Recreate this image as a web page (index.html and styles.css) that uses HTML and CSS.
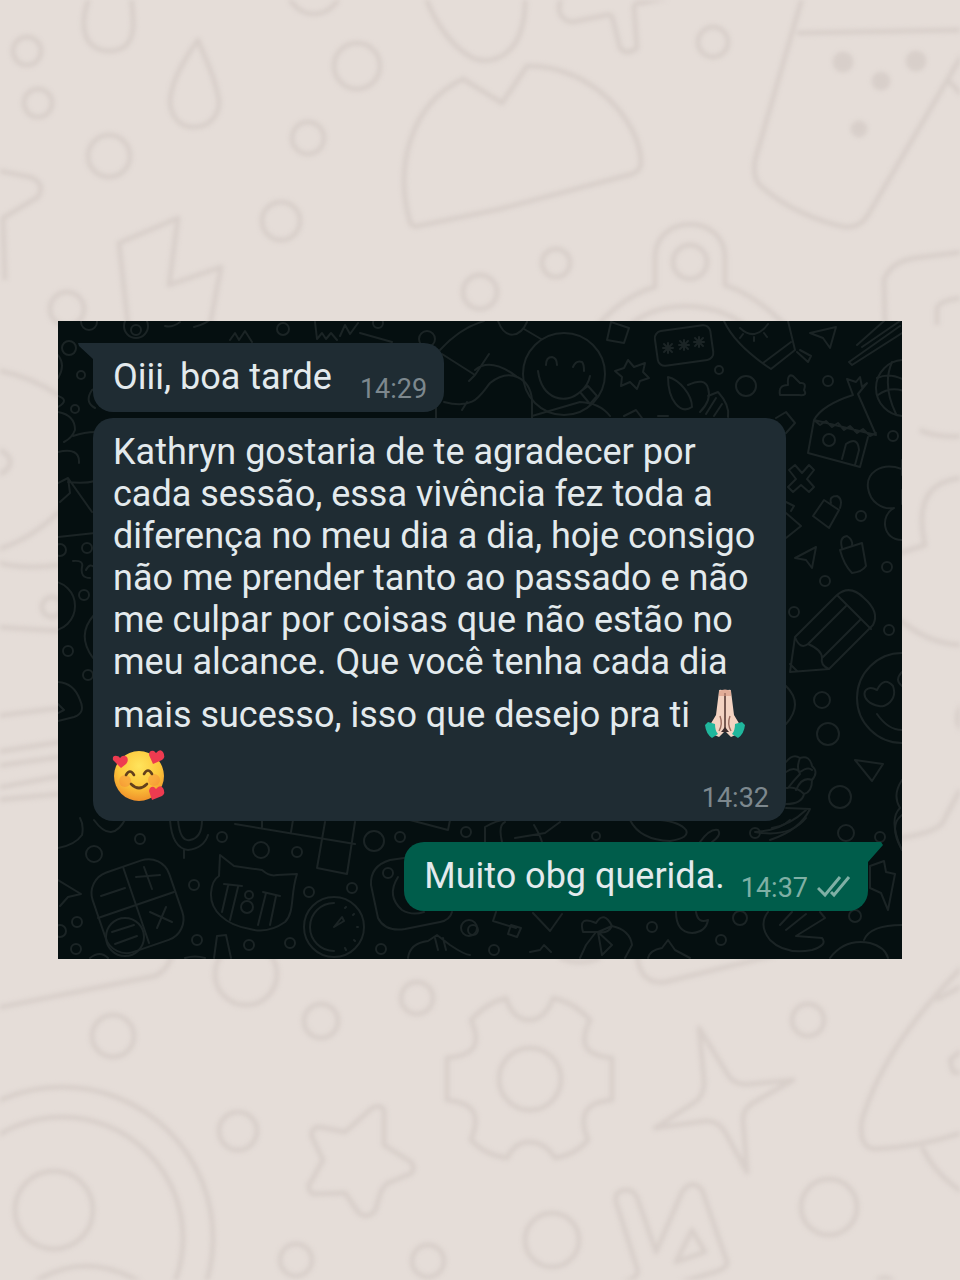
FILE: index.html
```html
<!DOCTYPE html>
<html lang="pt-BR">

<head>
    <meta charset="UTF-8">
    <meta name="viewport" content="width=device-width, initial-scale=1.0">
    <title>Depoimento</title>
    <link rel="stylesheet" href="styles.css">
</head>

<body>
    <!-- Light wallpaper -->
    <svg class="wallpaper" viewBox="0 0 960 1280" preserveAspectRatio="xMidYMid slice" aria-hidden="true">
        <circle cx="27" cy="51" r="14" />
        <circle cx="38" cy="103" r="14" />
        <circle cx="109" cy="156" r="21" />
        <circle cx="308" cy="138" r="16" />
        <circle cx="357" cy="66" r="23" />
        <circle cx="281" cy="221" r="19" />
        <circle cx="314" cy="-13" r="27" />
        <circle cx="67" cy="309" r="17" />
        <circle cx="480" cy="292" r="17" />
        <circle cx="556" cy="263" r="14" />
        <circle cx="713" cy="42" r="15" />
        <path d="M92 -10C80 18 78 50 110 51C140 50 134 18 130 -10" />
        <path d="M198 40C180 65 170 85 170 103C172 120 182 127 194 127C212 127 220 112 219 100C214 75 208 65 198 40Z" />
        <path d="M-5 170L30 177Q46 183 38 197L3 218L5 280" />
        <path d="M128 325L119 243L178 218L169 285L221 267L210 325" />
        <path d="M425 -5C435 25 455 50 475 59C495 65 515 52 521 30Q526 15 525 -5" />
        <path d="M410 222C395 170 408 105 463 79L502 103L527 66C590 65 640 120 641 162Q641 171 632 174L500 209L418 226Q412 227 410 222Z" />
        <path d="M563 -5C555 10 560 20 572 22L607 15Q612 14 613 20L620 48Q627 56 637 48L634 8Q634 2 642 3L680 -5" />
        <path d="M803 -5L755 160Q752 180 762 187C785 208 820 222 845 227Q860 228 868 215L965 50M797 33L962 30M948 80L962 95" />
        <g class="filled">
            <circle cx="843" cy="62" r="8" />
            <circle cx="881" cy="81" r="7" />
            <circle cx="916" cy="61" r="8" />
            <circle cx="859" cy="129" r="6" />
        </g>
        <circle cx="690" cy="262" r="17" />
        <path d="M598 325Q625 295 655 287V258C655 213 725 213 725 258V285Q755 295 785 325M630 325C660 300 710 300 745 325" />
        <path d="M885 325L884 280Q890 262 915 258L962 252M937 325V308Q940 300 962 298" />

        <path d="M-4 370Q30 376 60 396M0 450Q15 458 8 468Q4 474 -4 474M-4 550Q30 540 60 511M-4 562Q20 570 60 565" />
        <circle cx="52" cy="607" r="10" />
        <path d="M-4 627L60 631M-4 716L60 708M-4 752L60 742M-4 766L60 757M-4 788L60 776M-4 800L60 794" />
        <path d="M900 553L925 545C915 500 930 480 964 478M900 620Q930 645 964 645M964 702Q952 718 962 730M900 838Q942 832 945 818L960 790M920 430Q935 438 964 436" />

        <path d="M-4 1008L155 976Q168 970 172 955" />
        <circle cx="246" cy="974" r="31" />
        <circle cx="113" cy="1036" r="21" />
        <circle cx="321" cy="1021" r="17" />
        <circle cx="417" cy="998" r="16" />
        <circle cx="238" cy="1131" r="19" />
        <circle cx="296" cy="1260" r="16" />
        <circle cx="428" cy="1261" r="16" />
        <circle cx="62" cy="1238" r="151" />
        <circle cx="62" cy="1238" r="121" />
        <circle cx="54" cy="1210" r="39" />
        <path d="M30 1285Q85 1247 145 1285" />
        <path d="M372 1108Q386 1102 384 1118L384 1145L411 1162Q418 1172 405 1176L388 1183Q381 1188 379 1198L375 1211Q366 1220 358 1212L345 1193L313 1194Q305 1188 312 1180L323 1160L312 1137Q310 1127 320 1127L345 1132Z" />
        <path d="M506 998Q513 1020 529 1020Q545 1020 553 998Q575 1003 590 1020C578 1045 585 1055 612 1058V1100C585 1102 578 1115 588 1140Q575 1155 555 1158Q545 1142 529 1142Q515 1142 507 1158Q485 1155 471 1140C481 1115 475 1103 447 1100V1058C475 1055 482 1045 471 1020Q486 1003 506 998Z" />
        <circle cx="530" cy="1079" r="31" />
        <path d="M699 1028L728 1075Q735 1086 750 1084L793 1080L758 1100Q742 1108 743 1120L747 1172L725 1132Q718 1120 705 1121L655 1128L695 1102Q705 1095 704 1080Z" />
        <circle cx="808" cy="1020" r="16" />
        <circle cx="829" cy="1207" r="28" />
        <circle cx="552" cy="1240" r="27" />
        <circle cx="885" cy="1290" r="12" />
        <path d="M610 1285Q642 1280 637 1268L616 1202Q614 1190 627 1190Q635 1190 638 1200L656 1252L682 1192Q692 1178 702 1190L727 1262Q728 1268 715 1272L675 1284M692 1230L676 1262L705 1252Z" />
        <path d="M964 965C920 1010 880 1060 862 1120Q858 1148 875 1149Q920 1147 964 1132M922 1147Q935 1175 964 1193M936 1000L962 986M962 1050L950 1060L953 1072L964 1073" />
        <path d="M637 955Q640 985 665 982L775 955M560 958Q580 966 600 958" />
    </svg>

    <main class="chat">
        <!-- Dark doodles, drawn on a 844 x 638 sheet that starts at 58,321 -->
        <svg class="doodles" viewBox="58 321 844 638" preserveAspectRatio="xMidYMid slice" aria-hidden="true">
            <!-- top -->
            <circle cx="89" cy="322" r="8" />
            <circle cx="69" cy="348" r="7" />
            <circle cx="81" cy="375" r="4" />
            <circle cx="75" cy="409" r="4" />
            <circle cx="136" cy="326" r="12" />
            <circle cx="136" cy="330" r="5" />
            <circle cx="283" cy="329" r="6" />
            <circle cx="378" cy="323" r="5" />
            <circle cx="427" cy="339" r="8" />
            <path d="M165 326Q172 328 180 322M194 327Q206 324 212 318M230 340L235 333L239 340L245 331L252 342M315 322L317 339L322 333L326 339L331 333L337 340M340 336L345 325L350 334L358 323M360 333L392 342" />
            <path d="M440 350Q460 328 484 321M442 354L475 375L489 354M475 375L469 381M444 402C475 410 480 395 490 383C510 367 530 378 532 400V418M475 370Q490 357 516 376M436 392V418M467 402L462 410" />
            <circle cx="564" cy="374" r="41" />
            <path d="M546 365Q546 357 552 357Q557 358 557 365M573 367Q576 360 582 362Q584 364 584 371M538 371C542 400 566 405 580 392Q588 386 590 376M580 392L588 386L597 396L590 404ZM532 416L580 402Q600 403 610 416M498 321C505 340 520 338 527 322M524 329L541 339" />
            <path d="M611 322L629 328L624 343L607 340Z" />
            <path d="M628 360L634 367L645 363L643 372L649 378L640 381L637 389L630 382L621 386L622 377L615 371L624 368Z" />
            <rect x="656" y="328" width="56" height="35" rx="7" transform="rotate(-8 684 345)" />
            <path d="M663 348H673M668 343V353M664 344L672 352M672 344L664 352M679 345H689M684 340V350M680 341L688 349M688 341L680 349M694 342H704M699 337V347M695 338L703 346M703 338L695 346" />
            <path d="M724 321Q735 345 771 369L795 350L788 321M763 363L791 342M797 352L808 362L811 356L800 350M740 328Q755 342 768 324M743 334L740 338M754 337V341M764 333L767 337" />
            <path d="M810 333L836 327L830 348L823 338Z" />
            <path d="M857 345L884 321M862 347L900 321M849 362L900 326M852 365L902 333M849 362L852 365" />
            <circle cx="719" cy="370" r="4" />
            <circle cx="746" cy="386" r="10" />
            <circle cx="828" cy="381" r="5" />
            <path d="M780 395Q778 385 788 385Q787 373 793 376L800 383Q807 382 804 390Q808 396 799 395Z" />
            <circle cx="904" cy="388" r="28" />
            <path d="M877 378Q890 372 904 380M878 395Q890 386 904 391M892 362Q882 385 896 414" />
            <path d="M668 377C680 380 692 395 692 407C680 415 668 400 668 377M688 385Q705 377 708 388Q712 400 700 412M708 396L718 392Q730 405 728 417M716 398L706 414M722 404L714 416M624 416L636 410L642 418M658 416L668 416" />
            <path d="M776 418L786 412L795 423L786 433" />
            <!-- right column -->
            <path d="M853 395L847 379L856 382L860 377L862 387L867 383L858 394L876 435L814 420Q822 405 853 395M814 420L808 453L860 467L868 437M814 420L820 425L826 421L832 427L838 423L844 430L850 426L857 433L863 429L870 436L876 433M842 459L846 444Q858 436 859 450L855 465" />
            <circle cx="829" cy="440" r="6" />
            <circle cx="893" cy="436" r="5" />
            <path d="M789 470L795 465L802 473L809 465L814 470L807 479L814 487L809 492L801 485L793 492L788 487L796 479Z" />
            <path d="M902 469C880 461 866 474 868 488C870 502 882 510 894 508M894 508C880 515 882 540 902 540M902 460V475M902 490V504" />
            <path d="M824 500L839 510L829 528L813 516ZM831 503Q829 496 837 496Q843 499 840 508" />
            <circle cx="861" cy="516" r="5" />
            <path d="M786 502L794 506L791 511M786 513L801 526L786 538" />
            <path d="M795 558L816 547L812 568L806 560Z" />
            <path d="M840 550L862 543L866 566Q862 572 852 573Q844 565 840 550M842 548Q839 537 847 536Q853 540 852 545" />
            <circle cx="887" cy="567" r="5" />
            <circle cx="825" cy="581" r="5" />
            <circle cx="794" cy="612" r="5" />
            <circle cx="889" cy="630" r="5" />
            <path d="M795 637L837 595Q850 584 864 598Q880 612 873 625L829 669L790 672ZM837 595L871 629M846 606L808 644M860 620L822 658M795 637Q800 650 808 644Q822 650 822 658Q820 665 829 669M790 664L797 671" />
            <circle cx="902" cy="698" r="45" />
            <path d="M879 706C858 702 862 682 877 690Q884 676 893 686C898 700 885 708 879 706M877 714Q888 730 902 730M902 672Q894 680 902 686" />
            <circle cx="822" cy="700" r="8" />
            <circle cx="828" cy="734" r="11" />
            <circle cx="840" cy="797" r="11" />
            <circle cx="846" cy="833" r="8" />
            <circle cx="880" cy="837" r="5" />
            <path d="M786 686Q804 704 786 724M855 760L883 764L872 781Z" />
            <path d="M786 762Q793 753 800 758Q810 755 812 766Q819 772 812 780Q812 792 804 794Q802 804 786 804M786 772Q794 766 800 772Q808 766 812 770M800 758Q796 768 800 774Q794 780 788 788M812 780Q802 776 796 790M786 788Q796 786 804 794" />
            <path d="M786 808L810 809Q800 830 770 840M806 810Q790 825 772 828" />
            <path d="M902 780Q892 795 900 808Q888 820 902 850" />
            <!-- left column -->
            <path d="M58 355Q66 365 58 378M58 396Q70 400 58 407M58 412Q75 415 75 430Q72 438 64 442M73 436Q85 432 95 432M58 452Q80 447 79 463M58 483L68 478L92 512M68 478L70 493L60 502M68 482Q84 484 95 481M95 408Q84 402 92 390L104 385M58 537L95 533M73 561Q84 560 82 567Q80 578 90 578M86 570Q90 562 95 568" />
            <circle cx="60" cy="550" r="6" />
            <circle cx="87" cy="548" r="5" />
            <circle cx="84" cy="595" r="5" />
            <circle cx="50" cy="606" r="25" />
            <path d="M94 615Q76 635 93 658" />
            <circle cx="68" cy="651" r="5" />
            <circle cx="88" cy="675" r="5" />
            <!-- bottom -->
            <path d="M58 682Q74 683 80 700Q86 713 74 717L58 721M58 704L64 710L58 713" />
            <circle cx="94" cy="854" r="8" />
            <circle cx="140" cy="839" r="5" />
            <path d="M58 848Q75 845 82 835Q84 825 80 818M94 820Q112 845 126 818M58 880L81 894L68 897L60 906M170 820Q172 848 188 850Q204 848 208 835M178 820Q180 842 190 840Q202 838 202 820M184 850V858" />
            <circle cx="60" cy="931" r="6" />
            <circle cx="77" cy="922" r="5" />
            <circle cx="76" cy="949" r="5" />
            <circle cx="222" cy="837" r="5" />
            <circle cx="261" cy="850" r="8" />
            <circle cx="297" cy="852" r="5" />
            <circle cx="194" cy="885" r="5" />
            <circle cx="309" cy="892" r="5" />
            <circle cx="352" cy="888" r="5" />
            <circle cx="374" cy="841" r="10" />
            <circle cx="400" cy="837" r="5" />
            <circle cx="466" cy="832" r="5" />
            <circle cx="197" cy="940" r="5" />
            <circle cx="249" cy="945" r="5" />
            <circle cx="290" cy="943" r="5" />
            <circle cx="381" cy="949" r="5" />
            <circle cx="469" cy="928" r="8" />
            <rect x="97" y="864" width="81" height="84" rx="22" transform="rotate(-19 138 906)" />
            <path d="M123 867L149 943M98 918L174 892M101 896L125 888M136 877L160 875M144 867L152 889M150 912L172 922M166 907L157 928M112 932L134 925M115 944L137 936" />
            <circle cx="125" cy="937" r="19" />
            <path d="M220 855L234 866L262 870Q270 877 277 875L297 874C290 895 295 912 285 922Q268 934 250 929C225 925 210 910 211 893Q212 880 219 876ZM224 884L242 886M228 886L222 912M238 887L230 920M263 892L280 896M266 893L258 925M276 896L270 925" />
            <circle cx="249" cy="895" r="4" />
            <circle cx="247" cy="907" r="6" />
            <path d="M235 824L355 844M325 822L317 868L347 874L355 822M262 820V827M293 820L291 832M410 820L448 830L450 820" />
            <circle cx="334" cy="927" r="30" />
            <path d="M334 903A24 24 0 1 0 334 951M334 927L342 917L344 921ZM345 908L346 907M353 915L354 914M357 927H358M354 940L355 941M345 948L346 950M214 958L217 936L226 935L231 958M185 958Q195 955 205 958M90 958Q100 950 108 958" />
            <path d="M404 858L390 860Q370 866 371 885L378 918Q385 932 405 929L440 922Q450 920 452 912M398 877Q386 896 402 910Q412 916 424 912" />
            <circle cx="388" cy="873" r="5" />
            <path d="M408 958Q410 943 428 941L437 935L450 945Q465 955 470 955M435 938L438 950M443 938L446 950" />
            <path d="M485 842V827Q500 818 510 820M502 842Q498 825 505 822M515 838L545 833L560 822M534 825Q540 835 542 842M630 820Q640 840 670 841Q690 838 686 830Q680 822 660 820M700 842Q710 828 718 830Q722 835 712 842M755 832Q790 838 806 818M755 832Q780 830 790 820" />
            <circle cx="596" cy="836" r="4" />
            <circle cx="755" cy="833" r="5" />
            <path d="M902 815Q888 825 902 850M870 866L884 861L886 872L895 874L888 910L881 893L870 888Z" />
            <path d="M496 912L493 921L516 928M511 925L521 928L517 937L508 934ZM533 913L550 931L562 914M583 932Q578 915 596 923Q604 910 612 926Q608 934 598 932ZM596 932L586 945L580 958M598 932L602 955L612 945L598 932L612 926Q630 930 632 945L625 958M530 952L540 950L544 945L551 952M648 958Q650 950 662 948L668 940L675 950L690 958M676 912Q676 932 692 933Q706 932 708 920Q698 924 696 912" />
            <circle cx="473" cy="930" r="5" />
            <circle cx="494" cy="950" r="5" />
            <circle cx="652" cy="927" r="5" />
            <circle cx="721" cy="940" r="5" />
            <circle cx="740" cy="918" r="7" />
            <circle cx="855" cy="916" r="6" />
            <path d="M768 912Q758 925 770 940Q785 955 812 950Q828 945 822 938L796 936L825 918L820 912M780 925L792 912M786 930L806 914M830 958Q845 938 870 943Q885 947 888 958M864 940Q870 925 902 925" />
        </svg>

        <div class="bubble received tail">
            <p class="text">Oiii, boa tarde</p>
            <time class="time">14:29</time>
        </div>

        <div class="bubble received long">
            <p class="text">Kathryn gostaria de te agradecer por cada sessão, essa vivência fez toda a diferença no meu dia a
                dia, hoje consigo não me prender tanto ao passado e não me culpar por coisas que não estão no meu
                alcance. Que você tenha cada dia mais sucesso, isso que desejo pra ti
                <svg class="emoji" viewBox="0 0 52 52" role="img" aria-label="Mãos juntas">
                    <path d="M20 3Q20 1 23 2Q25 2 25 5V44L20 49L9 44L11 37L17 27Z" fill="#f3d3c2" />
                    <path d="M32 3Q32 1 29 2Q27 2 27 5V44L32 49L43 44L41 37L35 27Z" fill="#f3d3c2" />
                    <path d="M20 3Q26 0 32 3V8H20Z" fill="#e2ad98" />
                    <path d="M26 5V44M21 28Q24 36 20 43M31 28Q28 36 32 43" fill="none" stroke="#9c6d60" stroke-width="1.4" />
                    <path d="M26 39L22 44H30Z" fill="#3b2b2b" />
                    <path d="M9 34L16 36Q16 43 19 46L13 50Q7 46 6 37Z" fill="#20b79d" />
                    <path d="M43 34L36 36Q36 43 33 46L39 50Q45 46 46 37Z" fill="#20b79d" />
                </svg>
                <svg class="emoji" viewBox="0 0 52 52" role="img" aria-label="Rosto sorridente com corações">
                    <defs>
                        <radialGradient id="face" cx="0.5" cy="0.3" r="0.7">
                            <stop offset="0" stop-color="#ffe45c" />
                            <stop offset="0.6" stop-color="#fcc63a" />
                            <stop offset="1" stop-color="#f0922b" />
                        </radialGradient>
                    </defs>
                    <circle cx="26" cy="26" r="25" fill="url(#face)" />
                    <circle cx="12" cy="31" r="6" fill="#f67f3c" opacity="0.4" />
                    <circle cx="41" cy="30" r="6" fill="#f67f3c" opacity="0.4" />
                    <path d="M13 25Q17 18 21 25M31 24Q35 17 39 24M18 34Q26 42 34 34" fill="none" stroke="#63401c" stroke-width="2.6" stroke-linecap="round" />
                    <path d="M8 18L0 10Q-1 5 4 6Q6 6 7 8Q10 4 14 7Q16 11 13 14Z" fill="#ee3b50" />
                    <path d="M40 14L36 5Q36 0 41 1L43 3Q47 -2 50 2Q53 7 49 10Z" fill="#ee3b50" />
                    <path d="M39 50L36 41Q37 36 41 37L43 39Q47 34 50 38Q53 43 49 46Z" fill="#ee3b50" />
                </svg>
            </p>
            <time class="time">14:32</time>
        </div>

        <div class="bubble sent tail">
            <p class="text">Muito obg querida.</p>
            <time class="time">14:37</time>
            <svg class="ticks" viewBox="0 0 34 24" role="img" aria-label="Entregue">
                <path d="M1 13L8 20L23 2M14 17L17 20L32 2" />
            </svg>
        </div>
    </main>
</body>

</html>
```
FILE: styles.css
```css
body {
    margin: 0;
    min-height: 100vh;
    padding: 0 58px;
    box-sizing: border-box;
    position: relative;
    display: flex;
    align-items: center;
    background-color: #e5ddd8;
    font-family: Roboto, sans-serif;
    overflow-x: hidden;
}

.wallpaper {
    position: absolute;
    top: 0;
    left: 0;
    width: 100%;
    height: 100%;
    fill: none;
    stroke: #d8cfca;
    stroke-width: 5;
    stroke-linejoin: round;
    filter: blur(2px);
}

.filled {
    fill: #d8cfca;
}

.chat {
    position: relative;
    flex: 1;
    display: flex;
    flex-direction: column;
    align-items: flex-start;
    gap: 6px;
    padding: 22px 34px 48px 35px;
    background-color: #050f10;
}

.doodles {
    position: absolute;
    top: 0;
    left: 0;
    width: 100%;
    height: 100%;
    fill: none;
    stroke: #1b2425;
    stroke-width: 2;
    stroke-linejoin: round;
    stroke-linecap: round;
}

.bubble {
    position: relative;
    display: flex;
    align-items: flex-end;
    padding: 13px 17px 7px 20px;
    border-radius: 20px;
    color: #e3eaed;
}

.received {
    gap: 28px;
    background-color: #1f2c33;
}

.sent {
    gap: 16px;
    align-self: flex-end;
    margin-top: 15px;
    background-color: #005d4b;
}

/* the time sits in the corner, on the last line of the text */
.long {
    display: grid;
    max-width: 693px;
    box-sizing: border-box;
}

.long .text,
.long .time {
    grid-area: 1 / 1;
}

.long .time {
    align-self: end;
    justify-self: end;
}

.tail::before {
    content: "";
    position: absolute;
    top: 0;
    width: 36px;
    height: 22px;
    background-color: inherit;
}

.received.tail::before {
    left: -15px;
    clip-path: polygon(0 0, 100% 0, 100% 100%, 15px 100%, 15px 16px, 1px 3px);
}

.sent.tail::before {
    right: -15px;
    clip-path: polygon(0 0, 34px 0, 36px 3px, 21px 20px, 21px 100%, 0 100%);
}

.text {
    position: relative;
    margin: 0 0 7px;
    font-size: 36px;
    line-height: 42px;
}

.time {
    font-size: 27px;
    line-height: 32px;
    color: #7d888e;
}

.sent .time {
    color: #7fb0a5;
}

.emoji {
    width: 52px;
    height: 52px;
    margin: 5px 0;
    vertical-align: -18px;
    overflow: visible;
}

.ticks {
    width: 34px;
    height: 24px;
    margin: 0 0 5px -7px;
    fill: none;
    stroke: #7fb0a5;
    stroke-width: 3;
}
```
